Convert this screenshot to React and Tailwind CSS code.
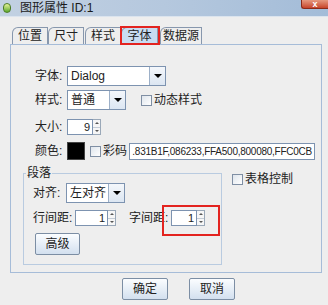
import React from 'react';

const tabs = ['位置', '尺寸', '样式', '字体', '数据源'];

function Combo({ value, width }) {
  return (
    <div className={`flex shrink-0 h-[20px] ${width} border border-[#7d93b0] bg-white`}>
      <div className="flex-1 flex items-center pl-[3px] text-[12px] text-[#222] whitespace-nowrap">{value}</div>
      <div className="w-[16px] flex items-center justify-center border-l border-[#9db0c8] bg-gradient-to-b from-[#f4f7fb] to-[#dce6f2]">
        <div className="w-0 h-0 border-l-[4px] border-r-[4px] border-t-[4px] border-l-transparent border-r-transparent border-t-black" />
      </div>
    </div>
  );
}

function Spinner({ value, width }) {
  return (
    <div className="flex shrink-0 h-[16px]">
      <div className={`${width} border border-[#7d93b0] bg-white flex items-center justify-end pr-[2px] text-[11px] text-[#222]`}>{value}</div>
      <div className="w-[8px] flex flex-col border border-l-0 border-[#9aa8b8]">
        <div className="flex-1 flex items-center justify-center border-b border-[#c4ccd6] bg-[#f6f6f6]">
          <div className="w-0 h-0 border-l-[2px] border-r-[2px] border-b-[2px] border-l-transparent border-r-transparent border-b-[#555]" />
        </div>
        <div className="flex-1 flex items-center justify-center bg-[#f6f6f6]">
          <div className="w-0 h-0 border-l-[2px] border-r-[2px] border-t-[2px] border-l-transparent border-r-transparent border-t-[#555]" />
        </div>
      </div>
    </div>
  );
}

function Check({ label }) {
  return (
    <div className="flex shrink-0 items-center gap-[2px]">
      <div className="w-[11px] h-[11px] border border-[#7f8fa4] bg-gradient-to-br from-[#dfe5ec] to-[#ffffff]" />
      <span className="text-[12px] leading-[14px] text-[#222] whitespace-nowrap">{label}</span>
    </div>
  );
}

function Btn({ label, width }) {
  return (
    <div className={`${width} shrink-0 h-[22px] flex items-center justify-center border border-[#7c8ea4] rounded-[2px] bg-gradient-to-b from-[#fbfdff] to-[#d3e0ef] text-[12px] text-[#222]`}>
      {label}
    </div>
  );
}

export default function App() {
  return (
    <div className="w-[328px] h-[305px] bg-[#eeeeee] font-['Liberation_Sans','Noto_Sans_CJK_SC',sans-serif] flex flex-col overflow-hidden">
      {/* title bar */}
      <div className="h-[17px] flex items-start bg-gradient-to-r from-[#c2d1e2] via-[#b5c8de] to-[#a3bcd8] border-b border-[#dbe4ee]">
        <div className="ml-[3px] mt-[3px] w-[8px] h-[10px] rounded-full bg-gradient-to-b from-[#e8f59a] to-[#5aa82a] border border-[#4d7d27]" />
        <span className="ml-[9px] mt-[1px] text-[12px] leading-[14px] text-[#1a1a1a]">图形属性 ID:1</span>
        <div className="ml-auto w-[27px] h-[9px] rounded-bl-[3px] bg-gradient-to-b from-[#e5987f] to-[#c6432a] border border-[#8c2b1a] border-t-0 border-r-0 flex items-end justify-center">
          <span className="text-white text-[9px] leading-[8px] font-bold">x</span>
        </div>
      </div>

      {/* tabs */}
      <div className="flex items-end h-[27px] pl-[12px]">
        {tabs.map((t) => {
          const active = t === '字体';
          return (
            <div key={t} className="relative">
              <div
                className={`h-[17px] flex items-center justify-center border border-b-0 border-[#8797ad] rounded-tl-[6px] text-[12px] text-[#222] ${
                  active ? 'w-[37px] bg-[#c8dcf1] mr-[2px]' : t === '数据源' ? 'w-[42px] bg-[#eeeeee]' : t === '尺寸' ? 'w-[36px] bg-[#eeeeee] mr-[1px]' : 'w-[36px] bg-[#eeeeee]'
                }`}
              >
                {t}
              </div>
              {active && <div className="absolute left-[-1px] top-[-1px] w-[40px] h-[19px] border-2 border-[#e3231f]" />}
            </div>
          );
        })}
      </div>

      {/* panel */}
      <div className="ml-[10px] mr-[6px] h-[229px] border border-[#a6bcd8] flex flex-col pl-[24px]">
        <div className="flex items-center mt-[21px]">
          <span className="w-[32px] shrink-0 text-[12px] text-[#222]">字体:</span>
          <Combo value="Dialog" width="w-[99px]" />
        </div>
        <div className="flex items-center mt-[4px]">
          <span className="w-[32px] shrink-0 text-[12px] text-[#222]">样式:</span>
          <Combo value="普通" width="w-[59px]" />
          <div className="ml-[15px]"><Check label="动态样式" /></div>
        </div>
        <div className="flex items-center mt-[8px]">
          <span className="w-[32px] shrink-0 text-[12px] text-[#222]">大小:</span>
          <Spinner value="9" width="w-[26px]" />
        </div>
        <div className="flex items-center mt-[6px]">
          <span className="w-[32px] shrink-0 text-[12px] text-[#222]">颜色:</span>
          <div className="w-[18px] h-[18px] shrink-0 bg-black border border-[#444]" />
          <div className="ml-[5px]"><Check label="彩码" /></div>
          <div className="ml-[2px] w-[186px] shrink-0 h-[17px] border border-[#7d93b0] bg-white flex items-center justify-end overflow-hidden pr-[2px]">
            <span className="text-[10px] tracking-[-0.25px] text-[#222] whitespace-nowrap">.831B1F,086233,FFA500,800080,FFC0CB</span>
          </div>
        </div>

        <div className="flex items-start mt-[13px] -ml-[12px]">
          {/* group */}
          <div className="relative w-[199px] h-[92px] border border-[#b9cbe0] pl-[9px] flex flex-col">
            <span className="absolute left-[2px] top-[-8px] px-[1px] bg-[#eeeeee] text-[12px] leading-[14px] text-[#222]">段落</span>
            <div className="flex items-center mt-[9px]">
              <span className="w-[33px] shrink-0 text-[12px] text-[#222]">对齐:</span>
              <Combo value="左对齐" width="w-[59px]" />
            </div>
            <div className="flex items-center mt-[6px]">
              <span className="w-[42px] shrink-0 text-[12px] text-[#222]">行间距:</span>
              <Spinner value="1" width="w-[33px]" />
              <span className="ml-[13px] w-[42px] shrink-0 text-[12px] text-[#222]">字间距:</span>
              <Spinner value="1" width="w-[26px]" />
            </div>
            <div className="mt-[6px] ml-[2px]"><Btn label="高级" width="w-[45px]" /></div>
            <div className="absolute left-[138px] top-[31px] w-[58px] h-[31px] border-2 border-[#e3231f]" />
          </div>
          <div className="ml-[10px] -mt-[1px]"><Check label="表格控制" /></div>
        </div>
      </div>

      {/* buttons */}
      <div className="flex gap-[21px] mt-[5px] pl-[122px]">
        <Btn label="确定" width="w-[46px]" />
        <Btn label="取消" width="w-[46px]" />
      </div>
    </div>
  );
}
